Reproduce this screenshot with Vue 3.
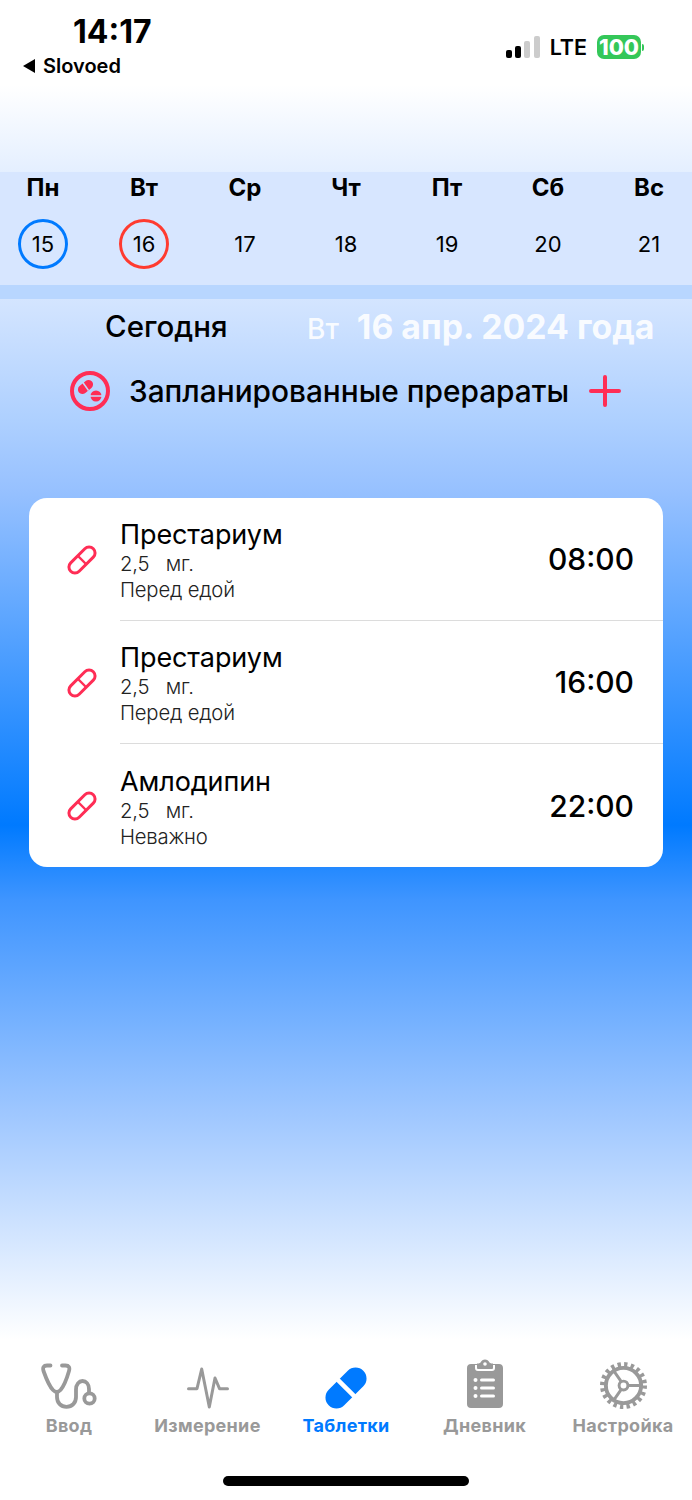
<template>
  <div class="screen">
    <header class="status">
      <div class="status-left">
        <div class="clock">14:17</div>
        <div class="back"><span class="back-arrow"></span>Slovoed</div>
      </div>
      <div class="status-right">
        <div class="signal">
          <i class="on s1"></i><i class="on s2"></i><i class="s3"></i><i class="s4"></i>
        </div>
        <span class="lte">LTE</span>
        <span class="battery">100</span>
        <span class="battery-tip"></span>
      </div>
    </header>

    <section class="week">
      <div v-for="d in days" :key="d.num" class="day">
        <div class="day-name">{{ d.name }}</div>
        <div class="day-num" :class="d.mark">{{ d.num }}</div>
      </div>
    </section>
    <div class="week-gap"></div>

    <div class="date-row">
      <span class="today">Сегодня</span>
      <span class="date"><span class="weekday">Вт</span>16 апр. 2024 года</span>
    </div>

    <div class="planned">
      <svg class="planned-icon" width="40" height="40" viewBox="0 0 40 40">
        <circle cx="20" cy="20" r="18" fill="none" stroke="#ff2d55" stroke-width="4" />
        <rect x="7" y="11.500" width="17" height="9" rx="4.500" fill="#ff2d55" transform="rotate(-40 15.500 16)" />
        <line x1="12.500" y1="11" x2="18.500" y2="19.500" stroke="#c2dbff" stroke-width="1.500" />
        <circle cx="26" cy="25" r="5.500" fill="#ff2d55" />
        <line x1="20" y1="25" x2="32" y2="25" stroke="#c2dbff" stroke-width="1.500" />
      </svg>
      <span class="planned-text">Запланированные прерараты</span>
      <svg class="plus" width="32" height="32" viewBox="0 0 32 32">
        <path d="M16 2v28M2 16h28" stroke="#ff2d55" stroke-width="4" stroke-linecap="round" />
      </svg>
    </div>

    <main class="card">
      <div v-for="(m, i) in meds" :key="i" class="med">
        <svg class="pill" width="34" height="34" viewBox="0 0 34 34">
          <g transform="rotate(-45 17 17)">
            <rect x="1" y="11" width="32" height="12" rx="6" fill="none" stroke="#ff2d55" stroke-width="3" />
            <line x1="17" y1="11" x2="17" y2="23" stroke="#ff2d55" stroke-width="2.400" />
          </g>
        </svg>
        <div class="med-body" :class="{ last: i === meds.length - 1 }">
          <div class="med-info">
            <div class="med-name">{{ m.name }}</div>
            <div class="med-dose">2,5 &nbsp; мг.</div>
            <div class="med-note">{{ m.note }}</div>
          </div>
          <div class="med-time">{{ m.time }}</div>
        </div>
      </div>
    </main>

    <div class="spacer"></div>

    <nav class="tabs">
      <div class="tab">
        <svg width="56" height="46" viewBox="0 0 56 46" fill="none" stroke="#999" stroke-width="3.800" stroke-linecap="round">
          <path d="M9.500 2.500H6C2.500 2.500 1.500 4.500 2.500 8 5 15 8 23 12 27c2.500 2.500 5 2.500 7.500 0C23 23 26 15 28 8c1-3.500 0-5.500-3.500-5.500H21" />
          <path d="M16 29v5c0 6 4 9.800 9.500 9.800S35 40 35 34v-7.500c0-5 3-8.500 6.500-8.500s6.500 3 6.500 8v3" />
          <circle cx="48.500" cy="35.500" r="5.200" />
        </svg>
        <span>Ввод</span>
      </div>
      <div class="tab">
        <svg width="42" height="42" viewBox="0 0 42 42" fill="none" stroke="#999" stroke-width="3" stroke-linecap="round" stroke-linejoin="round">
          <path d="M1.500 21.700h8.500L14.700 2l7.600 38L28 11l4.500 10.700h8" />
        </svg>
        <span>Измерение</span>
      </div>
      <div class="tab active">
        <svg width="42" height="42" viewBox="0 0 42 42">
          <g transform="rotate(-45 21 21)">
            <rect x="-3.500" y="10" width="49" height="22" rx="11" fill="#007aff" />
            <line x1="21" y1="8" x2="21" y2="34" stroke="#fff" stroke-width="4.500" />
          </g>
        </svg>
        <span>Таблетки</span>
      </div>
      <div class="tab">
        <svg width="36" height="50" viewBox="0 0 36 50">
          <path fill="#999" d="M4 5h6V4.500C10 4.500 13 4.500 13.500 3.500 14.500 1.500 16 .5 18 .5s3.500 1 4.500 3c.5 1 3.500 1 3.500 1V5h6c2.500 0 4 1.500 4 4v36c0 2.500-1.500 4-4 4H4c-2.500 0-4-1.500-4-4V9c0-2.500 1.500-4 4-4Z" />
          <path fill="none" stroke="#fff" stroke-width="2" d="M9 6v3c0 1 .8 2 2 2h14c1.200 0 2-1 2-2V6" />
          <circle cx="18" cy="5" r="1.800" fill="#fff" />
          <g fill="#fff">
            <circle cx="8.500" cy="21" r="2" /><rect x="13" y="19.500" width="15" height="3" rx="1.500" />
            <circle cx="8.500" cy="29" r="2" /><rect x="13" y="27.500" width="15" height="3" rx="1.500" />
            <circle cx="8.500" cy="37" r="2" /><rect x="13" y="35.500" width="15" height="3" rx="1.500" />
          </g>
        </svg>
        <span>Дневник</span>
      </div>
      <div class="tab">
        <svg width="47" height="47" viewBox="0 0 48 48" fill="none" stroke="#999">
          <circle cx="24" cy="24" r="18" stroke-width="4" />
          <circle cx="24" cy="24" r="21.500" stroke-width="5" stroke-dasharray="3.400 3.355" />
          <circle cx="24" cy="24" r="4.500" stroke-width="3" />
          <path d="M28.500 24H42M21.700 20 13 7.500M21.700 28 13 40.500" stroke-width="3" />
        </svg>
        <span>Настройка</span>
      </div>
    </nav>

    <div class="home-bar"></div>
  </div>
</template>

<script setup>
const days = [
  { name: 'Пн', num: 15, mark: 'blue' },
  { name: 'Вт', num: 16, mark: 'red' },
  { name: 'Ср', num: 17 },
  { name: 'Чт', num: 18 },
  { name: 'Пт', num: 19 },
  { name: 'Сб', num: 20 },
  { name: 'Вс', num: 21 }
]

const meds = [
  { name: 'Престариум', note: 'Перед едой', time: '08:00' },
  { name: 'Престариум', note: 'Перед едой', time: '16:00' },
  { name: 'Амлодипин', note: 'Неважно', time: '22:00' }
]
</script>

<style>
body { margin: 0; }
</style>

<style scoped>
.screen {
  width: 692px;
  height: 1500px;
  display: flex;
  flex-direction: column;
  overflow: hidden;
  font-family: Inter, "Liberation Sans", sans-serif;
  color: #000;
  background: linear-gradient(to bottom, #fff 0, #fff 85px, #e4efff 172px, #d4e5ff 299px, #aed0ff 420px, #97c1ff 490px, #007aff 825px, #3f95ff 900px, #9dc6ff 1110px, #fff 1340px, #fff 100%);
}

/* status bar */
.status { height: 172px; box-sizing: border-box; padding: 16px 48px 0 23px; display: flex; justify-content: space-between; align-items: flex-start; flex-shrink: 0; }
.clock { font-size: 32px; line-height: 32px; font-weight: 700; margin-left: 50px; }
.back { display: flex; align-items: center; font-size: 20px; line-height: 24px; font-weight: 600; margin-top: 6px; }
.back-arrow { width: 0; height: 0; border-style: solid; border-width: 7px 12px 7px 0; border-color: transparent #000 transparent transparent; margin-right: 8px; }
.status-right { display: flex; align-items: center; margin-top: 18px; }
.signal { display: flex; align-items: flex-end; gap: 3.300px; height: 22px; margin-right: 10px; }
.signal i { width: 6px; border-radius: 2px; background: #ccc; }
.signal .on { background: #000; }
.s1 { height: 8px; }
.s2 { height: 12px; }
.s3 { height: 17px; }
.s4 { height: 22px; }
.lte { font-size: 21.500px; font-weight: 600; margin-right: 10px; }
.battery { width: 44px; height: 24px; border-radius: 7px; background: #34c759; color: #fff; font-size: 22px; line-height: 24px; font-weight: 800; text-align: center; }
.battery-tip { width: 2px; height: 7px; border-radius: 0 2px 2px 0; background: #34c759; margin-left: 1px; }

/* week */
.week { height: 113px; background: #d7e6ff; display: grid; grid-template-columns: repeat(7, 101px); justify-content: center; flex-shrink: 0; }
.week-gap { height: 14px; background: #b8d6ff; flex-shrink: 0; }
.day { display: flex; flex-direction: column; align-items: center; }
.day-name { font-size: 24px; line-height: 30px; font-weight: 700; margin-top: 1px; }
.day-num { width: 50px; height: 50px; box-sizing: border-box; margin-top: 16px; border-radius: 50%; display: flex; align-items: center; justify-content: center; font-size: 22px; font-weight: 400; }
.blue { border: 3px solid #007aff; }
.red { border: 3px solid #ff3b30; }

.date-row { height: 54px; display: flex; align-items: center; flex-shrink: 0; }
.today { font-size: 29.500px; font-weight: 500; margin-left: 105px; width: 202px; white-space: nowrap; }
.date { font-size: 33.800px; font-weight: 700; color: rgba(255, 255, 255, 0.88); white-space: nowrap; }
.weekday { font-size: 28px; font-weight: 500; margin-right: 18px; }

.planned { display: flex; align-items: center; height: 60px; padding-left: 70px; flex-shrink: 0; margin-top: 8px; }
.planned-text { font-size: 29.800px; font-weight: 500; margin-left: 19px; white-space: nowrap; }
.plus { margin-left: 20px; }

/* med list */
.card { margin: 77px 29px 0; background: #fff; border-radius: 18px; flex-shrink: 0; }
.med { display: flex; height: 123px; align-items: stretch; }
.pill { align-self: center; margin-left: 36px; margin-right: 21px; flex-shrink: 0; }
.med-body { flex: 1; display: flex; justify-content: space-between; align-items: center; border-bottom: 1px solid #dcdcdc; padding-right: 29px; }
.med-body.last { border-bottom: 0; }
.med-info { margin-top: 4px; }
.med-name { font-size: 27px; line-height: 32px; font-weight: 400; letter-spacing: -0.100px; }
.med-dose, .med-note { font-size: 20.300px; line-height: 26px; font-weight: 300; color: #222; letter-spacing: -0.200px; }
.med-time { font-size: 30px; font-weight: 500; }

.spacer { flex: 1; }

/* bottom tabs */
.tabs { display: grid; grid-template-columns: 138px 139px 138px 139px 138px; height: 86px; flex-shrink: 0; }
.tab { display: flex; flex-direction: column; align-items: center; justify-content: flex-end; color: #999; font-size: 18px; line-height: 24px; font-weight: 700; letter-spacing: 0.300px; white-space: nowrap; }
.tab svg { margin-bottom: 5px; }
.tab.active { color: #007aff; }
.home-bar { width: 246px; height: 10px; border-radius: 5px; background: #000; margin: 38px auto 14px; flex-shrink: 0; }
</style>
